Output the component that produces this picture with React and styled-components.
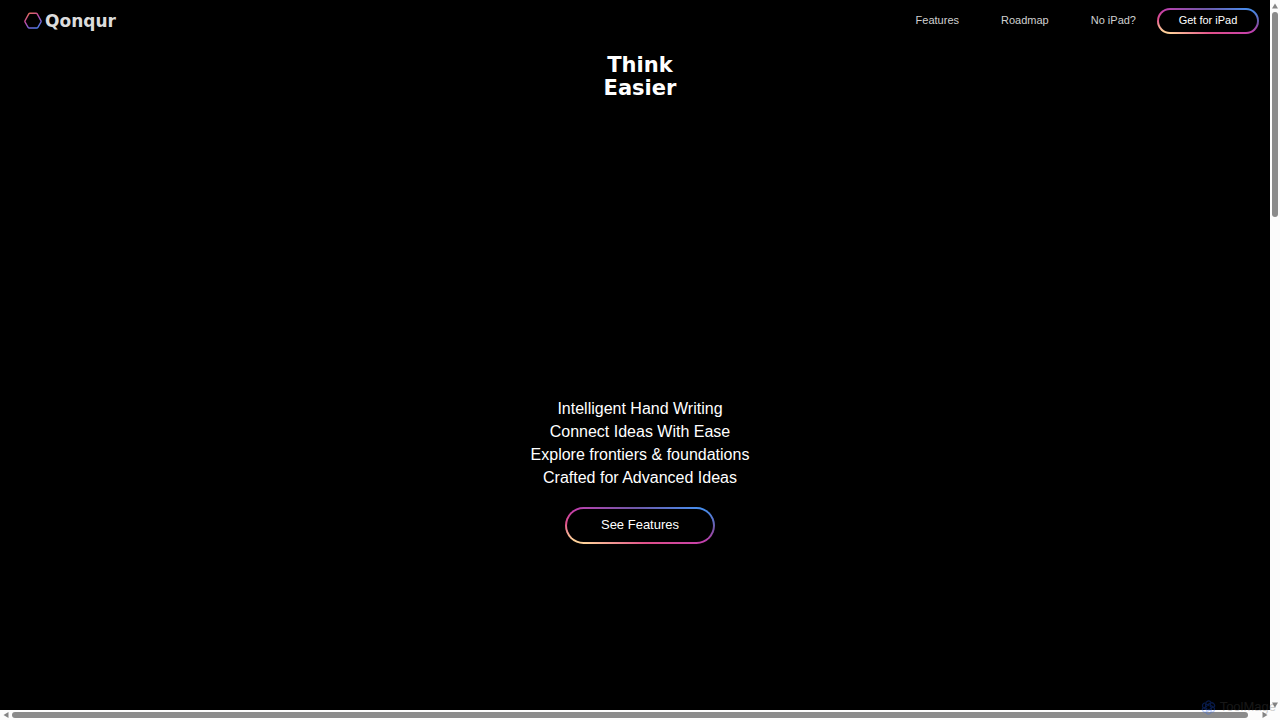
import React from "react";
import styled, { createGlobalStyle } from "styled-components";

const Global = createGlobalStyle`
  *, *::before, *::after { box-sizing: border-box; }
  html, body { margin: 0; background: #000; }
  body { font-family: "Liberation Sans", Arial, sans-serif; color: #fff; }
`;

const Frame = styled.div`
  position: relative;
  display: grid;
  grid-template-columns: minmax(0, 1fr) 10px;
  grid-template-rows: minmax(0, 1fr) 10px;
  height: 100vh;
  background: #fcfcfc;
`;

const Pane = styled.div`
  overflow: hidden;
  background: #000;
`;

const Page = styled.div`
  width: calc(100% + 10px);
`;

const Header = styled.header`
  display: flex;
  align-items: center;
  justify-content: space-between;
  height: 42px;
  padding: 0 21px 0 24px;
`;

const Brand = styled.a`
  display: flex;
  align-items: center;
  gap: 3px;
  color: #dcdcdc;
  font: bold 17px/20px "DejaVu Sans", sans-serif;
  text-decoration: none;
`;

const Nav = styled.nav`
  display: flex;
  align-items: center;
  gap: 42px;
`;

const NavLink = styled.a`
  padding-bottom: 2px;
  color: #d0d0d0;
  font-size: 11px;
  line-height: 16px;
  text-decoration: none;
`;

const Actions = styled.div`
  display: flex;
  align-items: center;
  gap: 21px;
`;

const GradientButton = styled.button`
  width: ${(p) => (p.$large ? 150 : 102)}px;
  height: ${(p) => (p.$large ? 37 : 26)}px;
  padding: 0 0 2px;
  border: 2px solid transparent;
  border-radius: 20px;
  background:
    linear-gradient(#000, #000) padding-box,
    linear-gradient(to top right, #ffd29a 8%, #e0508a 28%, #c23fae 50%, #7058a8 72%, #4690f0 94%) border-box;
  color: #fff;
  font: ${(p) => (p.$large ? 13 : 11)}px/16px "Liberation Sans", Arial, sans-serif;
  cursor: pointer;
`;

const Hero = styled.main`
  display: flex;
  flex-direction: column;
  align-items: center;
  padding-top: 12px;
  text-align: center;
`;

const Title = styled.h1`
  margin: 0;
  font: bold 21px/23px "DejaVu Sans", sans-serif;
`;

const Stage = styled.div`
  height: 297px;
`;

const Taglines = styled.ul`
  margin: 0 0 18px;
  padding: 0;
  list-style: none;
  font-size: 16px;
  line-height: 23px;
`;

const VerticalTrack = styled.div`
  display: flex;
  flex-direction: column;
  align-items: center;
  gap: 3px;
  padding-top: 3px;
`;

const HorizontalTrack = styled.div`
  display: flex;
  align-items: center;
  gap: 3px;
  padding-left: 3px;
`;

const Thumb = styled.div`
  border-radius: 3px;
  background: #8b8b8b;
  ${(p) => (p.$vertical ? "width: 6px; height: 29%;" : "height: 6px; flex: 1; margin-right: 22px;")}
`;

const Watermark = styled.div`
  position: absolute;
  right: 4px;
  bottom: 5px;
  display: flex;
  align-items: center;
  gap: 4px;
  color: #555;
  font: 13px/16px "Liberation Sans", Arial, sans-serif;
  opacity: 0.28;
`;

const WatermarkIcon = styled.svg`
  display: block;
  flex: none;
`;

const CornerArrow = styled.div`
  position: absolute;
  right: ${(p) => p.$right}px;
  bottom: ${(p) => p.$bottom}px;
  display: flex;
`;

function Arrow({ angle = 0 }) {
  return (
    <svg width="6" height="6" viewBox="0 0 6 6" display="block" aria-hidden="true">
      <path d="M3 .5 6 5.5H0Z" fill="#858585" transform={`rotate(${angle} 3 3)`} />
    </svg>
  );
}

function Hexagon() {
  return (
    <svg width="18" height="18" viewBox="0 0 18 18" aria-hidden="true">
      <defs>
        <linearGradient id="hex" x1="0.2" y1="0" x2="0.8" y2="1">
          <stop offset="0" stopColor="#e0705c" />
          <stop offset=".35" stopColor="#c8489c" />
          <stop offset=".65" stopColor="#8a5cc8" />
          <stop offset="1" stopColor="#4a7be8" />
        </linearGradient>
      </defs>
      <path
        d="M6 1.200h6q.8 0 1.200.7l3.700 6.800q.4.700 0 1.400l-3 5.200q-.4.700-1.200.7H5.300q-.8 0-1.200-.7l-3-5.200q-.4-.7 0-1.400l3.700-6.800q.4-.7 1.200-.7Z"
        fill="none"
        stroke="url(#hex)"
        strokeWidth="1.400"
      />
    </svg>
  );
}

function Knot() {
  return (
    <WatermarkIcon width="15" height="15" viewBox="0 0 16 16" aria-hidden="true">
      <g fill="none" stroke="#1c5cff" strokeWidth="1.400">
        {[0, 60, 120, 180, 240, 300].map((a) => (
          <path key={a} d="M5 8V4a3 3 0 0 1 5.600-1.500M5 4l3.500 2" transform={`rotate(${a} 8 8)`} />
        ))}
      </g>
    </WatermarkIcon>
  );
}

export default function App() {
  return (
    <>
      <Global />
      <Frame>
        <Pane>
          <Page>
            <Header>
              <Brand href="#"><Hexagon />Qonqur</Brand>
              <Actions>
                <Nav>
                  <NavLink href="#features">Features</NavLink>
                  <NavLink href="#roadmap">Roadmap</NavLink>
                  <NavLink href="#no-ipad">No iPad?</NavLink>
                </Nav>
                <GradientButton type="button">Get for iPad</GradientButton>
              </Actions>
            </Header>
            <Hero>
              <Title>Think<br />Easier</Title>
              <Stage />
              <Taglines>
                <li>Intelligent Hand Writing</li>
                <li>Connect Ideas With Ease</li>
                <li>Explore frontiers &amp; foundations</li>
                <li>Crafted for Advanced Ideas</li>
              </Taglines>
              <GradientButton type="button" $large>See Features</GradientButton>
            </Hero>
          </Page>
        </Pane>
        <VerticalTrack><Arrow /><Thumb $vertical /></VerticalTrack>
        <HorizontalTrack><Arrow angle={-90} /><Thumb /></HorizontalTrack>
        <CornerArrow $right={2} $bottom={12}><Arrow angle={180} /></CornerArrow>
        <CornerArrow $right={12} $bottom={2}><Arrow angle={90} /></CornerArrow>
        <Watermark><Knot />ToolMage</Watermark>
      </Frame>
    </>
  );
}
